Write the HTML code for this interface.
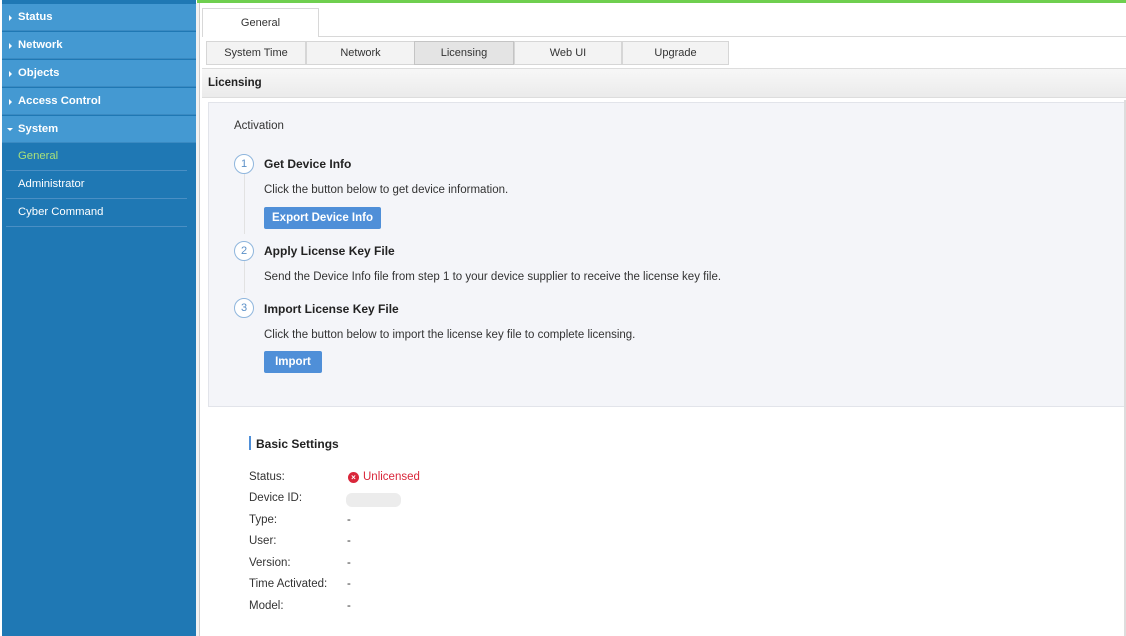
<!DOCTYPE html>
<html><head><style>
*{margin:0;padding:0;box-sizing:border-box}
body{width:1126px;height:636px;overflow:hidden;background:#fff;font-family:"Liberation Sans",Verdana,sans-serif;font-size:11px;color:#333;position:relative}
.abs{position:absolute}
#sb{left:2px;top:0;width:194px;height:636px;background:#1f78b4}
.top{position:absolute;left:0;width:194px;height:27px;background:#4499d2;color:#fff;font-weight:bold;font-size:11.3px;line-height:27px;padding-left:16px;border-bottom:1px solid #3a8ac2}
.top:before{content:"";position:absolute;left:7px;top:11px;border-left:3px solid #fff;border-top:3px solid transparent;border-bottom:3px solid transparent}
.top.open:before{left:5px;top:12px;border-top:3px solid #fff;border-left:3px solid transparent;border-right:3px solid transparent;border-bottom:0}
.sub{position:absolute;left:4px;width:181px;height:28px;color:#fff;font-size:11.3px;line-height:27px;padding-left:12px;border-bottom:1px solid #4a8fc4}
.tabsub{position:absolute;top:41px;height:24px;background:#f3f3f3;border:1px solid #d6d6d6;text-align:center;line-height:22px;font-size:11px;color:#333}
.step{position:absolute;left:234px;width:20px;height:20px;border:1px solid #8fb6dd;border-radius:50%;text-align:center;line-height:18px;color:#5a8fc7;font-size:11px;background:#fff}
.h{position:absolute;left:264px;font-weight:bold;font-size:12px;color:#222}
.t{position:absolute;left:264px;font-size:11.5px;color:#333}
.btn{position:absolute;left:264px;height:22px;background:#4f8fd8;color:#fff;font-weight:bold;font-size:11.5px;line-height:22px;text-align:center;border-radius:2px}
.lab{position:absolute;left:249px;font-size:11.5px;color:#333}
.val{position:absolute;left:347px;font-size:11.5px;color:#333}
</style></head><body>
<div class="abs" style="left:197px;top:0;width:929px;height:3px;background:#6fcf4f"></div>
<div id="sb" class="abs">
<div class="top" style="top:4px">Status</div>
<div class="top" style="top:32px">Network</div>
<div class="top" style="top:60px">Objects</div>
<div class="top" style="top:88px">Access Control</div>
<div class="top open" style="top:116px">System</div>
<div class="sub" style="top:143px;color:#a8e07a">General</div>
<div class="sub" style="top:171px">Administrator</div>
<div class="sub" style="top:199px">Cyber Command</div>
</div>
<div class="abs" style="left:196px;top:3px;width:4px;height:633px;background:#f2f2f2;border-right:1px solid #ccc"></div>
<div class="abs" style="left:202px;top:36px;width:924px;height:1px;background:#d8d8d8"></div>
<div class="abs" style="left:202px;top:8px;width:117px;height:29px;background:#fff;border:1px solid #d8d8d8;border-bottom:none;text-align:center;line-height:28px;font-size:11px">General</div>
<div class="tabsub" style="left:206px;width:100px">System Time</div>
<div class="tabsub" style="left:306px;width:109px">Network</div>
<div class="tabsub" style="left:414px;width:100px;background:#e4e4e4;border-color:#c4c4c4">Licensing</div>
<div class="tabsub" style="left:514px;width:108px">Web UI</div>
<div class="tabsub" style="left:622px;width:107px">Upgrade</div>
<div class="abs" style="left:202px;top:68px;width:924px;height:30px;background:linear-gradient(#f7f7f7,#ebebeb);border-top:1px solid #ddd;border-bottom:1px solid #ddd;font-weight:bold;font-size:11.5px;line-height:29px;padding-left:6px;color:#222">Licensing</div>
<div class="abs" style="left:208px;top:102px;width:917px;height:305px;background:#f4f5f9;border:1px solid #e2e4ea"></div>
<div class="abs" style="left:234px;top:120px;font-size:11.5px">Activation</div>
<div class="abs" style="left:244px;top:174px;width:1px;height:60px;background:#e2e2e2"></div>
<div class="abs" style="left:244px;top:261px;width:1px;height:32px;background:#e2e2e2"></div>
<div class="step" style="top:154px">1</div>
<div class="h" style="top:157px">Get Device Info</div>
<div class="t" style="top:184px">Click the button below to get device information.</div>
<div class="btn" style="top:207px;width:117px">Export Device Info</div>
<div class="step" style="top:241px">2</div>
<div class="h" style="top:244px">Apply License Key File</div>
<div class="t" style="top:271px">Send the Device Info file from step 1 to your device supplier to receive the license key file.</div>
<div class="step" style="top:298px">3</div>
<div class="h" style="top:302px">Import License Key File</div>
<div class="t" style="top:329px">Click the button below to import the license key file to complete licensing.</div>
<div class="btn" style="top:351px;width:58px">Import</div>
<div class="abs" style="left:249px;top:436px;width:2px;height:14px;background:#4f8fd8"></div>
<div class="abs" style="left:256px;top:437px;font-weight:bold;font-size:12px;color:#222">Basic Settings</div>
<div class="lab" style="top:471px">Status:</div>
<div class="abs" style="left:348px;top:472px;width:11px;height:11px;border-radius:50%;background:#d9263a;color:#fff;font-size:8px;line-height:11px;text-align:center;font-weight:bold">×</div>
<div class="abs" style="left:363px;top:471px;font-size:11.5px;color:#d9263a">Unlicensed</div>
<div class="lab" style="top:492px">Device ID:</div>
<div class="abs" style="left:346px;top:493px;width:55px;height:14px;background:#ececec;border-radius:6px"></div>
<div class="lab" style="top:514px">Type:</div><div class="val" style="top:514px">-</div>
<div class="lab" style="top:535px">User:</div><div class="val" style="top:535px">-</div>
<div class="lab" style="top:557px">Version:</div><div class="val" style="top:557px">-</div>
<div class="lab" style="top:578px">Time Activated:</div><div class="val" style="top:578px">-</div>
<div class="lab" style="top:600px">Model:</div><div class="val" style="top:600px">-</div>
<div class="abs" style="left:1124px;top:100px;width:2px;height:536px;background:#ddd"></div>
</body></html>
